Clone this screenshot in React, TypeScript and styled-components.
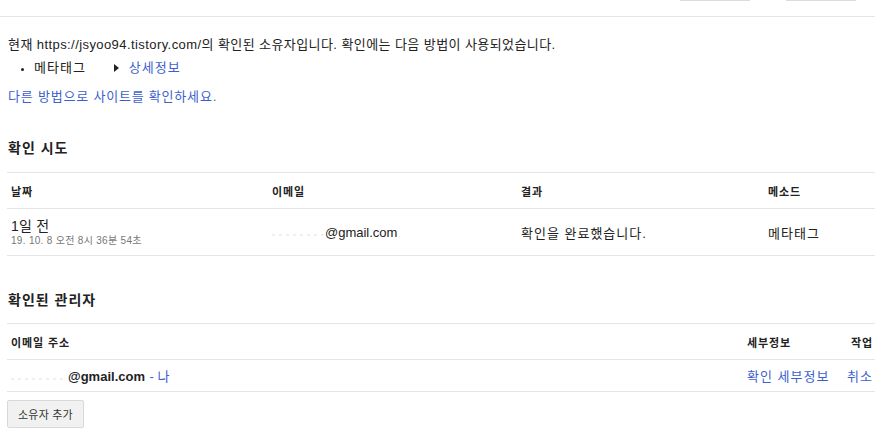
import React from "react";
import styled, { createGlobalStyle } from "styled-components";

const GlobalStyle = createGlobalStyle`
  html, body {
    margin: 0;
    padding: 0;
    background: #fff;
  }
  body {
    font-family: "Liberation Sans", Arial, "Noto Sans CJK KR", sans-serif;
    color: #222;
    font-size: 13px;
  }
`;

const Page = styled.div`
  width: 875px;
  overflow: hidden;
`;

const TopBar = styled.div`
  height: 16px;
  border-bottom: 1px solid #e5e5e5;
  display: flex;
  align-items: flex-end;
  padding-left: 679px;
  gap: 34px;
  overflow: hidden;
`;

const TopButton = styled.div`
  width: 70px;
  height: 30px;
  margin-bottom: 15px;
  border: 1px solid #dcdcdc;
  border-radius: 2px;
  background: #f5f5f5;
  flex-shrink: 0;
`;

const Content = styled.div`
  padding: 19px 0 0 7px;
`;

const Intro = styled.p`
  margin: 0 0 0 1px;
  line-height: 18px;
  letter-spacing: 0.42px;
`;

const MethodList = styled.ul`
  margin: 5px 0 0;
  padding-left: 27px;
  line-height: 18px;

  li::marker {
    font-size: 11px;
  }
`;

const MethodItem = styled.li`
  list-style: disc;
  letter-spacing: 1px;
`;

const Arrow = styled.span`
  display: inline-block;
  width: 0;
  height: 0;
  border-top: 4px solid transparent;
  border-bottom: 4px solid transparent;
  border-left: 5px solid #222;
  margin: 0 10px 0 28px;
`;

const Link = styled.a`
  color: #3c5fd0;
  text-decoration: none;
  cursor: pointer;
`;

const OtherMethod = styled.p`
  margin: 11px 0 0 1px;
  line-height: 18px;
  letter-spacing: 0.8px;
`;

const SectionTitle = styled.h3<{ $top: number }>`
  margin: ${({ $top }) => $top}px 0 0 1px;
  font-size: 14px;
  font-weight: bold;
  line-height: 18px;
  letter-spacing: 1px;
  color: #222;
`;

const Table = styled.table<{ $top: number }>`
  width: 100%;
  table-layout: fixed;
  margin-top: ${({ $top }) => $top}px;
  border-collapse: collapse;
  border-top: 1px solid #e5e5e5;
`;

const Th = styled.th<{ $w?: number; $align?: string }>`
  box-sizing: border-box;
  text-align: ${({ $align }) => $align || "left"};
  font-size: 11px;
  font-weight: bold;
  letter-spacing: 0.9px;
  color: #222;
  height: 36px;
  padding: 0 2px 0 4px;
  border-bottom: 1px solid #e5e5e5;
  width: ${({ $w }) => ($w ? `${$w}px` : "auto")};
`;

const Td = styled.td<{ $align?: string; $h?: number }>`
  text-align: ${({ $align }) => $align || "left"};
  height: ${({ $h }) => $h || 46}px;
  padding: 0 2px 0 4px;
  border-bottom: 1px solid #e5e5e5;
  font-size: 13px;
  letter-spacing: 1px;
  color: #222;
  white-space: nowrap;
`;

const DateMain = styled.div`
  font-size: 14px;
  line-height: 16px;
  margin-top: 2px;
  letter-spacing: 0.2px;
  color: #222;
`;

const DateSub = styled.div`
  font-size: 10px;
  line-height: 14px;
  letter-spacing: 0.3px;
  color: #777;
`;

const Latin = styled.span<{ $bold?: boolean }>`
  letter-spacing: 0;
  font-weight: ${({ $bold }) => ($bold ? "bold" : "normal")};
`;

/* blurred-out part of the address */
const Redacted = styled.span<{ $w: number }>`
  display: inline-block;
  width: ${({ $w }) => $w}px;
  height: 2px;
  margin-right: 1px;
  vertical-align: 1px;
  background: repeating-linear-gradient(
    90deg,
    #efefef 0 3px,
    transparent 3px 7px
  );
`;

const Me = styled.span`
  color: #3c5fd0;
  letter-spacing: 0;
`;

const AddButton = styled.button`
  margin-top: 8px;
  height: 28px;
  padding: 0 10px;
  font-family: inherit;
  font-size: 11px;
  letter-spacing: 0.2px;
  color: #333;
  background: #f1f1f1;
  border: 1px solid #d8d8d8;
  border-radius: 2px;
  cursor: pointer;
`;

export default function App() {
  return (
    <Page>
      <GlobalStyle />
      <TopBar>
        <TopButton />
        <TopButton />
      </TopBar>
      <Content>
        <Intro>
          현재 https://jsyoo94.tistory.com/의 확인된 소유자입니다. 확인에는 다음
          방법이 사용되었습니다.
        </Intro>
        <MethodList>
          <MethodItem>
            메타태그
            <Arrow />
            <Link>상세정보</Link>
          </MethodItem>
        </MethodList>
        <OtherMethod>
          <Link>다른 방법으로 사이트를 확인하세요.</Link>
        </OtherMethod>

        <SectionTitle $top={33}>확인 시도</SectionTitle>
        <Table $top={15}>
          <thead>
            <tr>
              <Th $w={261}>날짜</Th>
              <Th $w={249}>이메일</Th>
              <Th $w={247}>결과</Th>
              <Th>메소드</Th>
            </tr>
          </thead>
          <tbody>
            <tr>
              <Td>
                <DateMain>1일 전</DateMain>
                <DateSub>19. 10. 8 오전 8시 36분 54초</DateSub>
              </Td>
              <Td>
                <Redacted $w={52} />
                <Latin>@gmail.com</Latin>
              </Td>
              <Td>확인을 완료했습니다.</Td>
              <Td>메타태그</Td>
            </tr>
          </tbody>
        </Table>

        <SectionTitle $top={35}>확인된 관리자</SectionTitle>
        <Table $top={14}>
          <thead>
            <tr>
              <Th>이메일 주소</Th>
              <Th $w={97}>세부정보</Th>
              <Th $w={35} $align="right">
                작업
              </Th>
            </tr>
          </thead>
          <tbody>
            <tr>
              <Td $h={31}>
                <Redacted $w={56} />
                <Latin $bold>@gmail.com</Latin> <Me>- 나</Me>
              </Td>
              <Td $h={31}>
                <Link>확인 세부정보</Link>
              </Td>
              <Td $h={31} $align="right">
                <Link>취소</Link>
              </Td>
            </tr>
          </tbody>
        </Table>
        <AddButton>소유자 추가</AddButton>
      </Content>
    </Page>
  );
}
